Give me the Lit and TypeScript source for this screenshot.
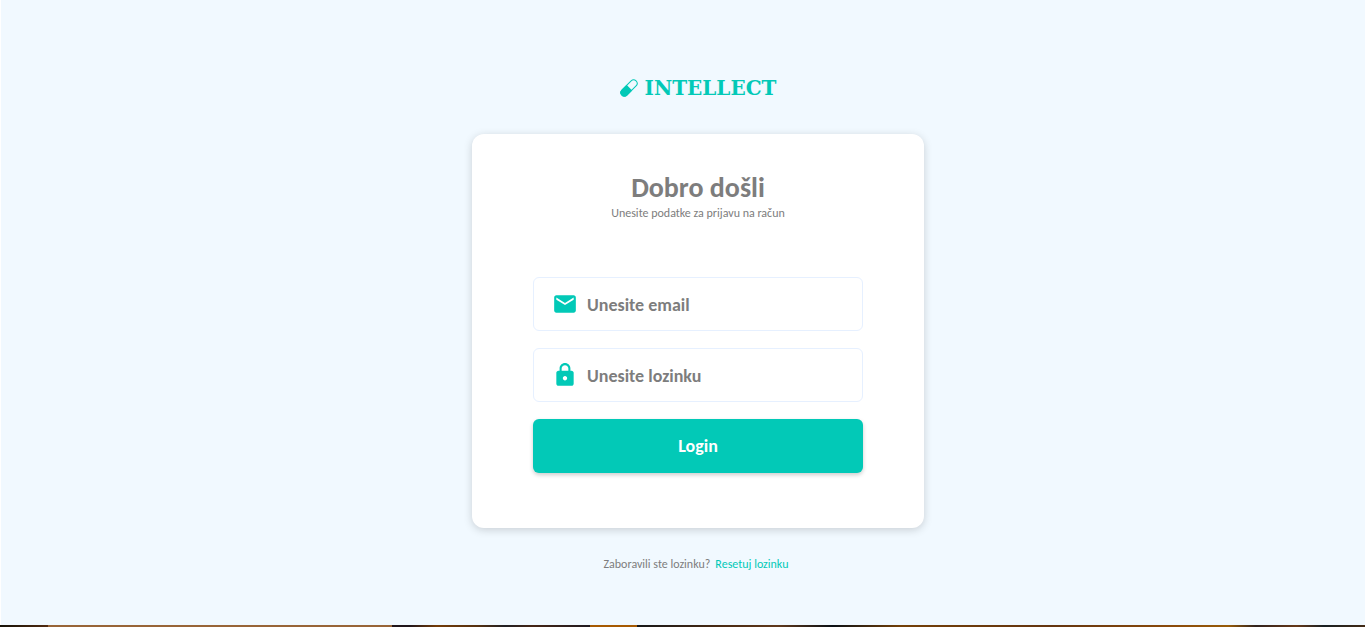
import { LitElement, html, css } from "lit";
import { customElement } from "lit/decorators.js";

@customElement("app-root")
export class AppRoot extends LitElement {
  static styles = css`
    :host {
      display: flex;
      flex-direction: column;
      min-height: 100vh;
      background: #f1f9ff;
      color: #7d7d7d;
      font-family: Calibri, Carlito, "Open Sans", sans-serif;
    }
    * {
      box-sizing: border-box;
    }
    .page {
      flex: 1;
      display: flex;
      flex-direction: column;
      align-items: center;
      padding: 76px 0 24px 30px;
      border-left: 1px solid #fff;
    }
    .brand {
      display: flex;
      align-items: center;
      gap: 7px;
      height: 24px;
      color: #02c9b7;
      font: bold 20px/24px Rockwell, "DejaVu Serif", serif;
    }
    .pill {
      width: 18px;
      height: 18px;
    }
    .card {
      width: 452px;
      max-width: 100%;
      margin-top: 34px;
      padding: 36px 61px 55px;
      background: #fff;
      border-radius: 12px;
      box-shadow: 0 2px 8px rgba(0, 0, 0, 0.17);
    }
    h1 {
      margin: 0;
      font-size: 28px;
      line-height: 36px;
      text-align: center;
    }
    .hint {
      margin: 0;
      font-size: 12px;
      line-height: 14px;
      text-align: center;
    }
    form {
      display: flex;
      flex-direction: column;
      gap: 17px;
      margin-top: 57px;
    }
    .field {
      display: flex;
      align-items: center;
      gap: 9px;
      height: 54px;
      padding: 0 18px;
      border: 1px solid #e6f0ff;
      border-radius: 6px;
      color: #02c9b7;
    }
    .icon {
      flex: none;
      width: 26px;
      height: 26px;
    }
    input {
      flex: 1;
      min-width: 0;
      padding: 2px 0 0;
      border: 0;
      outline: 0;
      background: none;
      color: #7d7d7d;
      font: bold 18px/24px Calibri, Carlito, "Open Sans", sans-serif;
    }
    input::placeholder {
      color: #7d7d7d;
      opacity: 1;
    }
    button {
      height: 54px;
      padding: 0;
      border: 0;
      border-radius: 6px;
      background: #02c9b7;
      color: #fff;
      font: bold 18px/24px Calibri, Carlito, "Open Sans", sans-serif;
      box-shadow: 0 2px 4px rgba(0, 0, 0, 0.2);
      cursor: pointer;
    }
    .reset {
      display: flex;
      gap: 5px;
      margin: 28px 0 0;
      padding-right: 4px;
      font-size: 12px;
      line-height: 16px;
    }
    a {
      color: #02c9b7;
      text-decoration: none;
    }
    .edge {
      height: 2px;
      background: linear-gradient(
        90deg,
        #151208 0,
        #512a10 3.5%,
        #986538 3.5%,
        #986538 28.7%,
        #20151a 28.7%,
        #20151a 30%,
        #743c08 32%,
        #553010 35%,
        #202024 37%,
        #452515 39%,
        #201a20 43.2%,
        #a65a02 43.2%,
        #a65a02 46.7%,
        #171819 46.7%,
        #4a2a12 53%,
        #60391c 57%,
        #0b1015 61%,
        #744008 66%,
        #643510 77%,
        #8b4b0b 86%,
        #985c09 90%,
        #30221d 92%,
        #663818 95%,
        #182023 97%,
        #422a15 100%
      );
    }
  `;

  render() {
    return html`
      <main class="page">
        <div class="brand">
          <svg class="pill" viewBox="0 0 18 18" aria-hidden="true">
            <g transform="rotate(-45 9 9)" stroke="currentColor" stroke-width="1">
              <rect x="-1" y="5.500" width="20" height="7" rx="3.500" fill="none" />
              <path d="M9 5.500H2.500a3.500 3.500 0 0 0 0 7h6.500z" fill="currentColor" />
            </g>
          </svg>
          <span>INTELLECT</span>
        </div>
        <section class="card">
          <h1>Dobro došli</h1>
          <p class="hint">Unesite podatke za prijavu na račun</p>
          <form @submit=${(e: Event) => e.preventDefault()}>
            <label class="field">
              <svg class="icon" viewBox="0 0 24 24" fill="currentColor" aria-hidden="true">
                <path d="M20 4H4c-1.100 0-1.990.9-1.990 2L2 18c0 1.100.9 2 2 2h16c1.100 0 2-.9 2-2V6c0-1.100-.9-2-2-2zm0 4l-8 5-8-5V6l8 5 8-5v2z" />
              </svg>
              <input type="email" placeholder="Unesite email" aria-label="Unesite email" />
            </label>
            <label class="field">
              <svg class="icon" viewBox="0 0 24 24" fill="currentColor" aria-hidden="true">
                <path d="M18 8h-1V6c0-2.760-2.240-5-5-5S7 3.240 7 6v2H6c-1.100 0-2 .9-2 2v10c0 1.100.9 2 2 2h12c1.100 0 2-.9 2-2V10c0-1.100-.9-2-2-2zm-6 9c-1.100 0-2-.9-2-2s.9-2 2-2 2 .9 2 2-.9 2-2 2zm3.100-9H8.900V6c0-1.710 1.390-3.100 3.100-3.100s3.100 1.390 3.100 3.100v2z" />
              </svg>
              <input type="password" placeholder="Unesite lozinku" aria-label="Unesite lozinku" />
            </label>
            <button type="submit">Login</button>
          </form>
        </section>
        <p class="reset"><span>Zaboravili ste lozinku?</span><a href="#reset">Resetuj lozinku</a></p>
      </main>
      <div class="edge"></div>
    `;
  }
}
